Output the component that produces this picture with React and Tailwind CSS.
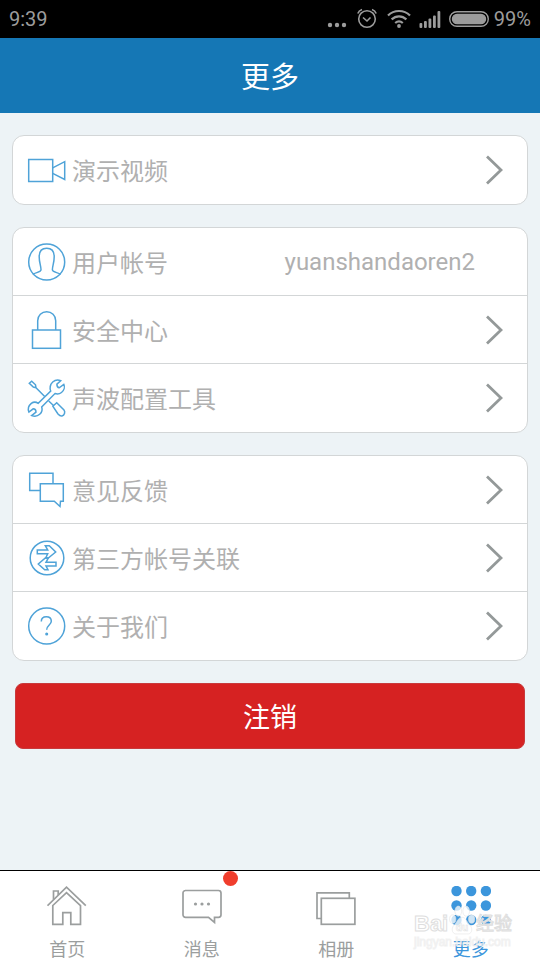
const ROW_ICONS = {
  video: (
    <>
      <rect x="0.7" y="8.5" width="24" height="22" />
      <path d="M24.7 16.8 36.7 10.7V28.5L24.7 22.3" />
    </>
  ),
  user: (
    <>
      <circle cx="18.7" cy="19" r="18" />
      <path d="M4.7 31.3C8 29.3 13 29.2 13 26.7C13 22.5 11.2 20 11.2 13.7C11.2 8.5 14 5.3 18.7 5.3S26.2 8.5 26.2 13.7C26.2 20 24.4 22.5 24.4 26.7C24.4 29.2 29.4 29.3 32.7 31.3" />
    </>
  ),
  lock: (
    <>
      <rect x="4.5" y="19" width="28" height="18.3" />
      <path d="M9.7 19V9.7a9 9 0 0 1 18 0V19" />
    </>
  ),
  tools: (
    <>
      <path d="M1.3 4.3 3.7 2.2 7.5 5.8 8 8.7 5.3 8Z M8 8.7 16.7 17.5 M20.7 22 26 27 M24.8 27.2 28.7 23.7 36 31C37.5 33 36.5 36.5 34 37C32.5 37.3 31.3 36.5 30 35Z" />
      <path d="M22.7 12C21.5 9.5 22 5.5 24.7 3C27 1 30 .5 32.7 1.7L28.9 5.2C28.9 7.2 29.3 8.5 31.2 8.8L35.8 5.3C37 8 36.2 11.5 33.5 13.5C31.5 15 29 15.2 27 14.5L13.7 28C14.5 30.5 13.8 33.5 11.7 35.3C9.5 37.3 6.5 37.6 3.7 36.6L8 33.2C8 31 7.2 29.8 5.2 29.8L.9 33C-.3 30 .8 26.5 3.3 24.4C5.3 22.9 8 22.8 10.2 24.3Z" />
    </>
  ),
  feedback: (
    <>
      <path d="M12.3 19.5H1.7V2.2H25V12.7" />
      <path d="M12.3 12.7H35.3V30.2H32.5L32 35.5 26.3 30.2H12.3Z" />
    </>
  ),
  link: (
    <>
      <circle cx="19" cy="19" r="16.8" />
      <path d="M9.3 11H19.7L17.3 6.7H21.3L27.7 13 20.3 19H17.7L19.7 14.7H9.3Z" />
      <path d="M28 27H18L20 30.7H16.7L10.3 25 17.3 19H20.3L18 23.3H28Z" />
    </>
  ),
  help: (
    <>
      <circle cx="18.7" cy="19" r="18" />
      <path d="M13.3 14.5C13.3 11.3 15.5 9.7 18.3 9.7S23.3 11.4 23.3 14.2C23.3 18 18.7 18 18.7 22.8" />
      <circle cx="18.7" cy="27" r="0.8" fill="currentColor" />
    </>
  ),
};

const NAV_ICONS = {
  home: (
    <>
      <path d="M.5 19.7 19.5 1.2 38.8 19.7" />
      <path d="M5.8 19.5V38.3H15.8V26.7H23.8V38.3H33.5V19.5L19.5 6.7Z" />
      <path d="M6.5 13.5V5H11.2V9" />
    </>
  ),
  message: (
    <>
      <path d="M3 4.5H36.5a2.5 2.5 0 0 1 2.5 2.5V28.8a2.5 2.5 0 0 1-2.5 2.5H32.5V36.5L26.5 31.3H3.5A2.5 2.5 0 0 1 1 28.8V7A2.5 2.5 0 0 1 3.5 4.5Z" />
      <g fill="currentColor" stroke="none">
        <circle cx="13.5" cy="18" r="1.6" />
        <circle cx="20" cy="18" r="1.6" />
        <circle cx="26.5" cy="18" r="1.6" />
      </g>
    </>
  ),
  album: (
    <>
      <path d="M5.3 32.5H1V6.8H33.3V12.3" />
      <rect x="5.3" y="12.3" width="33.6" height="26" />
    </>
  ),
  more: (
    <g fill="currentColor" stroke="none">
      {[5, 19.5, 34].map((y) =>
        [5.5, 20.2, 34.9].map((x) => <circle key={`${x}-${y}`} cx={x} cy={y} r="5.2" />)
      )}
    </g>
  ),
};

const GROUPS = [
  [{ icon: "video", label: "演示视频" }],
  [
    { icon: "user", label: "用户帐号", value: "yuanshandaoren2" },
    { icon: "lock", label: "安全中心" },
    { icon: "tools", label: "声波配置工具" },
  ],
  [
    { icon: "feedback", label: "意见反馈" },
    { icon: "link", label: "第三方帐号关联" },
    { icon: "help", label: "关于我们" },
  ],
];

const TABS = [
  { icon: "home", label: "首页" },
  { icon: "message", label: "消息", badge: true },
  { icon: "album", label: "相册" },
  { icon: "more", label: "更多", active: true },
];

function StatusBar() {
  return (
    <div className="flex h-[38px] items-center justify-between bg-black px-[9px] font-[Roboto,sans-serif] text-xl text-[#9c9c9c]">
      <span>9:39</span>
      <div className="flex items-center gap-2">
        <svg className="h-6 w-[20px]" viewBox="0 0 20 24" fill="currentColor" aria-hidden="true">
          <circle cx="3" cy="18" r="2.2" />
          <circle cx="10" cy="18" r="2.2" />
          <circle cx="17" cy="18" r="2.2" />
        </svg>
        <svg className="h-6 w-6" viewBox="0 0 24 24" fill="none" stroke="currentColor" strokeWidth="1.6" aria-hidden="true">
          <circle cx="12" cy="12" r="8.3" />
          <path d="M8 10.5 12 14 15.5 10.5M2.8 6.5C3.5 4.7 5 3.2 7 2.5M21.2 6.5C20.5 4.7 19 3.2 17 2.5" />
        </svg>
        <svg className="h-6 w-6" viewBox="0 0 24 24" fill="none" stroke="currentColor" strokeWidth="2.2" aria-hidden="true">
          <path d="M1 8.5C7 2.5 17 2.5 23 8.5M4.6 12.4C9 8.3 15 8.3 19.4 12.4M8.2 16C10.5 14 13.5 14 15.8 16" />
          <circle cx="12" cy="19" r="1.9" fill="currentColor" stroke="none" />
        </svg>
        <svg className="h-6 w-[22px]" viewBox="0 0 22 24" fill="currentColor" aria-hidden="true">
          <rect x="0.5" y="16" width="2.8" height="5" rx="1" />
          <rect x="5" y="14" width="2.8" height="7" rx="1" />
          <rect x="9.5" y="11.5" width="2.8" height="9.5" rx="1" />
          <rect x="14" y="8.5" width="2.8" height="12.5" rx="1" />
          <rect x="18.5" y="4" width="2.8" height="17" rx="1" />
        </svg>
        <svg className="h-6 w-10" viewBox="0 0 40 24" fill="none" stroke="currentColor" strokeWidth="1.4" aria-hidden="true">
          <rect x="0.7" y="4.7" width="38.6" height="14.6" rx="7.3" />
          <rect x="3.5" y="7.5" width="33" height="9" rx="4.5" fill="currentColor" />
        </svg>
        <span className="-ml-[3px]">99%</span>
      </div>
    </div>
  );
}

function Row({ icon, label, value }) {
  const content = (
    <>
      <svg
        className="h-[38px] w-[38px] shrink-0 overflow-visible text-[#4fa3d8]"
        viewBox="0 0 38 38"
        fill="none"
        stroke="currentColor"
        strokeWidth="1.5"
        aria-hidden="true"
      >
        {ROW_ICONS[icon]}
      </svg>
      <span className="ml-1.5 flex-1">{label}</span>
      {value ? (
        <span className="mr-7 font-[Roboto,sans-serif]">{value}</span>
      ) : (
        <svg
          className="h-[30px] w-[18px] shrink-0 text-[#949999]"
          viewBox="0 0 18 30"
          fill="none"
          stroke="currentColor"
          strokeWidth="2.8"
          aria-hidden="true"
        >
          <path d="M2 1.5 16 15 2 28.5" />
        </svg>
      )}
    </>
  );
  const className = "flex h-[68px] items-center pr-6 pl-[15px] text-2xl text-[#b0b0b0]";
  return value ? (
    <div className={className}>{content}</div>
  ) : (
    <a href="#" className={className}>
      {content}
    </a>
  );
}

function Watermark() {
  return (
    <div className="pointer-events-none absolute top-[33px] right-[28px] flex w-[98px] flex-col font-['Liberation_Sans','Noto_Sans_CJK_SC',sans-serif] whitespace-nowrap text-white/80">
      <div className="flex h-8 items-end justify-between">
        <span className="text-[22px] leading-6 font-bold [-webkit-text-stroke:1px_#dedede]">Bai</span>
        <svg className="h-8 w-[26px] shrink-0" viewBox="0 0 28 32" fill="#ffffff" fillOpacity="0.75" stroke="#e2e2e2" strokeWidth="0.6" aria-hidden="true">
          <ellipse cx="4" cy="15" rx="3.4" ry="4.5" />
          <ellipse cx="10" cy="6.5" rx="3.6" ry="5.5" />
          <ellipse cx="18.5" cy="6.5" rx="3.6" ry="5.5" />
          <ellipse cx="24.4" cy="15" rx="3.4" ry="4.5" />
          <path d="M14 13C18 13 19 18 22 21C27 26 24 32 19 31H9C4 32 1 26 6 21C9 18 10 13 14 13Z" />
          <text x="14" y="28" textAnchor="middle" fontSize="11" fontWeight="bold">du</text>
        </svg>
        <span className="text-lg leading-6 [-webkit-text-stroke:1px_#dedede]">经验</span>
      </div>
      <span className="text-xs leading-3 [-webkit-text-stroke:1px_#e4e4e480]">jingyan.baidu.com</span>
    </div>
  );
}

export default function App() {
  return (
    <div className="flex min-h-screen flex-col bg-[#edf3f6] font-['Noto_Sans_CJK_SC',sans-serif]">
      <StatusBar />
      <header className="flex h-[75px] items-center justify-center bg-[#1577b5]">
        <h1 className="text-[29px] text-white">更多</h1>
      </header>

      <main className="flex flex-1 flex-col gap-[22px] px-3 pt-[22px] pb-6">
        {GROUPS.map((rows) => (
          <section
            key={rows[0].icon}
            className="divide-y divide-[#d3d6d7] overflow-hidden rounded-xl border border-[#d3d6d7] bg-white"
          >
            {rows.map((row) => (
              <Row key={row.icon} {...row} />
            ))}
          </section>
        ))}
        <button type="button" className="mx-[3px] h-[66px] rounded-lg border border-[#c83a3c] bg-[#d62222] text-[27px] text-white">
          注销
        </button>
      </main>

      <nav className="relative grid h-[90px] grid-cols-4 border-t border-black bg-white pr-0.5">
        {TABS.map(({ icon, label, badge, active }) => (
          <a
            key={icon}
            href="#"
            aria-current={active ? "page" : undefined}
            className={`flex flex-col items-center gap-2 pt-[15px] text-lg ${active ? "text-[#3c96dc]" : "text-[#9b9e9e]"}`}
          >
            <span className="relative">
              <svg className="h-10 w-10" viewBox="0 0 40 40" fill="none" stroke="currentColor" strokeWidth="1.7" aria-hidden="true">
                {NAV_ICONS[icon]}
              </svg>
              {badge && <span className="absolute -top-[15px] -right-4 h-[15px] w-[15px] rounded-full bg-[#f03e2d]" />}
            </span>
            <span>{label}</span>
          </a>
        ))}
        <Watermark />
      </nav>
    </div>
  );
}
